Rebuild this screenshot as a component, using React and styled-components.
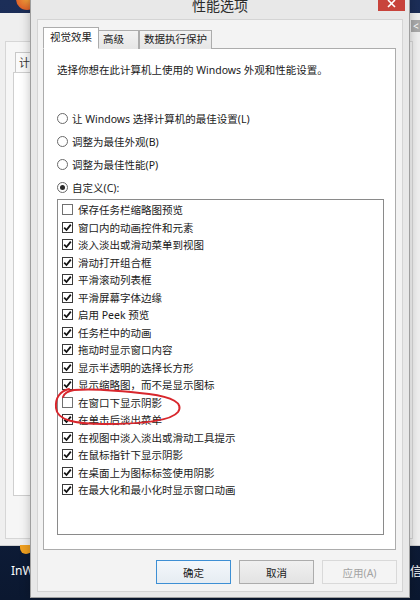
import React from "react";
import styled, { createGlobalStyle } from "styled-components";

const GlobalStyle = createGlobalStyle`
  html, body {
    margin: 0;
    padding: 0;
    width: 420px;
    height: 600px;
    overflow: hidden;
  }
  body {
    font-family: "Noto Sans", "Noto Sans CJK SC", sans-serif;
    color: #1a1a1a;
  }
`;

const Desktop = styled.div`
  position: relative;
  width: 420px;
  height: 600px;
  overflow: hidden;
  background: linear-gradient(180deg, #1c2e58 0%, #13244a 60%, #0b1830 100%);
`;

const Sun = styled.div`
  position: absolute;
  left: 16px;
  top: -12px;
  width: 22px;
  height: 22px;
  border-radius: 50%;
  background: radial-gradient(circle, #f2a23a 0%, #e0622a 70%, #b8402a 100%);
`;

const BackWindow = styled.div`
  position: absolute;
  left: 0;
  top: 13px;
  width: 420px;
  height: 532px;
  background: #efefef;
  border-bottom: 1px solid #d0d0d0;
`;

const BackPanel = styled.div`
  position: absolute;
  left: 5px;
  top: 28px;
  width: 408px;
  height: 498px;
  box-sizing: border-box;
  border: 1px solid #d6d6d6;
  background: #f6f6f6;
`;

const BackTab = styled.div`
  position: absolute;
  left: 9px;
  top: 10px;
  width: 30px;
  height: 20px;
  box-sizing: border-box;
  border: 1px solid #c8c8c8;
  border-bottom: none;
  background: #fafafa;
  font-size: 11px;
  line-height: 19px;
  padding-left: 3px;
  color: #333;
`;

const BackList = styled.div`
  position: absolute;
  left: 7px;
  top: 30px;
  width: 397px;
  height: 424px;
  box-sizing: border-box;
  border: 1px solid #cfcfcf;
  background: #fff;
`;

const BackArrow = styled.div`
  position: absolute;
  left: 411px;
  top: 7px;
  width: 12px;
  height: 12px;
  background: #a9a9a9;
  color: #fff;
  font-size: 10px;
  line-height: 12px;
  padding-left: 2px;
`;

const DesktopLabel = styled.div`
  position: absolute;
  top: 562px;
  left: ${(p) => p.$left}px;
  color: #fff;
  font-size: 12px;
  font-family: "Noto Sans", "Noto Sans CJK SC", sans-serif;
`;

const Icon = styled.div`
  position: absolute;
  left: 20px;
  top: 545px;
  width: 12px;
  height: 9px;
  border-radius: 0 0 6px 6px;
  background: #f0a020;
`;

const Dialog = styled.div`
  position: absolute;
  left: 30px;
  top: -6px;
  width: 380px;
  height: 604px;
  box-sizing: border-box;
  border: 1px solid #9e9e9e;
  background: #e8e8e8;
  display: flex;
  flex-direction: column;
  padding: 0 6px 5px;
  box-shadow: 0 0 10px rgba(0, 0, 0, 0.25);
`;

const TitleBar = styled.div`
  height: 24px;
  flex: none;
  text-align: center;
  font-size: 14px;
  line-height: 22px;
  color: #2b2b2b;
`;

const CloseButton = styled.div`
  position: absolute;
  right: 4px;
  top: 0;
  width: 27px;
  height: 16px;
  background: #c8433b;
  color: #fff;
  display: flex;
  align-items: center;
  justify-content: center;
`;

const Client = styled.div`
  flex: 1;
  display: flex;
  flex-direction: column;
  background: #f3f3f3;
  border: 1px solid #d4d4d4;
  padding: 8px 6px 7px 5px;
  min-height: 0;
`;

const Tabs = styled.div`
  display: flex;
  align-items: flex-end;
  height: 21px;
  margin-bottom: -1px;
  position: relative;
  z-index: 1;
`;

const Tab = styled.div`
  box-sizing: border-box;
  width: ${(p) => p.$w}px;
  height: ${(p) => (p.$active ? 22 : 19)}px;
  padding-left: ${(p) => (p.$active ? 6 : 4)}px;
  margin-right: ${(p) => (p.$active ? -1 : 0)}px;
  border: 1px solid #acacac;
  border-bottom: ${(p) => (p.$active ? "1px solid #fff" : "none")};
  background: ${(p) =>
    p.$active ? "#fff" : "linear-gradient(180deg, #f2f2f2, #e6e6e6)"};
  font-size: 10.5px;
  line-height: ${(p) => (p.$active ? 19 : 17)}px;
  color: #1a1a1a;
  white-space: nowrap;
  position: relative;
  z-index: ${(p) => (p.$active ? 2 : 1)};
`;

const Panel = styled.div`
  flex: 1;
  display: flex;
  flex-direction: column;
  background: #fff;
  border: 1px solid #acacac;
  padding: 14px 11px 14px 13px;
  min-height: 0;
`;

const Description = styled.div`
  font-size: 10.5px;
  line-height: 14px;
  margin-bottom: 30px;
`;

const RadioRow = styled.div`
  height: 23px;
  display: flex;
  align-items: center;
  gap: 4px;
  font-size: 10.5px;
`;

const Radio = styled.span`
  box-sizing: border-box;
  width: 11px;
  height: 11px;
  border-radius: 50%;
  border: 1px solid #6a6a6a;
  background: #fff;
  display: flex;
  align-items: center;
  justify-content: center;
  flex: none;

  &::after {
    content: "";
    width: 5px;
    height: 5px;
    border-radius: 50%;
    background: ${(p) => (p.$checked ? "#2a2a2a" : "transparent")};
  }
`;

const ListBox = styled.div`
  position: relative;
  flex: 1;
  border: 1px solid #8a8a8a;
  background: #fff;
  padding-top: 1px;
`;

const Item = styled.div`
  height: 17.5px;
  display: flex;
  align-items: center;
  gap: 5px;
  padding-left: 4px;
  font-size: 10.5px;
  white-space: nowrap;
`;

const Box = styled.span`
  box-sizing: border-box;
  width: 11px;
  height: 11px;
  border: 1px solid ${(p) => (p.$checked ? "#3a3a3a" : "#707070")};
  background: #fff;
  display: flex;
  align-items: center;
  justify-content: center;
  flex: none;
`;

const Circle = styled.svg`
  position: absolute;
  left: -4px;
  top: 186px;
  pointer-events: none;
`;

const Buttons = styled.div`
  display: flex;
  justify-content: flex-end;
  gap: 8px;
  margin-top: 10px;
  margin-right: -1px;
`;

const Button = styled.div`
  box-sizing: border-box;
  width: 75px;
  height: 24px;
  display: flex;
  align-items: center;
  justify-content: center;
  font-size: 10.5px;
  color: ${(p) => (p.$disabled ? "#a3a3a3" : "#1a1a1a")};
  border: 1px solid
    ${(p) => (p.$primary ? "#3d8fd4" : p.$disabled ? "#d9d9d9" : "#acacac")};
  background: ${(p) =>
    p.$disabled
      ? "#f4f4f4"
      : p.$primary
      ? "linear-gradient(180deg, #f3f7fb, #e6ecf2)"
      : "linear-gradient(180deg, #f0f0f0, #e3e3e3)"};
`;

const options = [
  { label: "让 Windows 选择计算机的最佳设置(L)" },
  { label: "调整为最佳外观(B)" },
  { label: "调整为最佳性能(P)" },
  { label: "自定义(C):", checked: true },
];

const effects = [
  ["保存任务栏缩略图预览", false],
  ["窗口内的动画控件和元素", true],
  ["淡入淡出或滑动菜单到视图", true],
  ["滑动打开组合框", true],
  ["平滑滚动列表框", true],
  ["平滑屏幕字体边缘", true],
  ["启用 Peek 预览", true],
  ["任务栏中的动画", true],
  ["拖动时显示窗口内容", true],
  ["显示半透明的选择长方形", true],
  ["显示缩略图，而不是显示图标", true],
  ["在窗口下显示阴影", false],
  ["在单击后淡出菜单", true],
  ["在视图中淡入淡出或滑动工具提示", true],
  ["在鼠标指针下显示阴影", true],
  ["在桌面上为图标标签使用阴影", true],
  ["在最大化和最小化时显示窗口动画", true],
];

const Check = () => (
  <svg width="9" height="9" viewBox="0 0 9 9">
    <path
      d="M1.2 4.6 L3.5 7 L7.8 1.6"
      fill="none"
      stroke="#111"
      strokeWidth="1.8"
      strokeLinejoin="miter"
    />
  </svg>
);

const App = () => {
  return (
    <Desktop>
      <GlobalStyle />
      <Sun />
      <BackWindow>
        <BackPanel>
          <BackTab>计</BackTab>
          <BackList />
        </BackPanel>
        <BackArrow>&lt;</BackArrow>
      </BackWindow>
      <Icon />
      <DesktopLabel $left={11}>InW</DesktopLabel>
      <DesktopLabel $left={410}>信</DesktopLabel>

      <Dialog>
        <TitleBar>性能选项</TitleBar>
        <CloseButton>
          <svg width="9" height="9" viewBox="0 0 9 9">
            <path d="M1 1 L8 8 M8 1 L1 8" stroke="#fff" strokeWidth="1.6" />
          </svg>
        </CloseButton>
        <Client>
          <Tabs>
            <Tab $active $w={56}>视觉效果</Tab>
            <Tab $w={41}>高级</Tab>
            <Tab $w={73}>数据执行保护</Tab>
          </Tabs>
          <Panel>
            <Description>
              选择你想在此计算机上使用的 Windows 外观和性能设置。
            </Description>
            {options.map((o) => (
              <RadioRow key={o.label}>
                <Radio $checked={o.checked} />
                {o.label}
              </RadioRow>
            ))}
            <ListBox>
              {effects.map(([label, checked]) => (
                <Item key={label}>
                  <Box $checked={checked}>{checked && <Check />}</Box>
                  {label}
                </Item>
              ))}
              <Circle width="130" height="42" viewBox="0 0 130 42">
                <path
                  d="M15 3 C6 5 1 12 2 22 C3 34 20 38 50 38 C85 38 117 35 124 26 C130 17 118 11 95 8 C70 5 40 2 20 4 C14 5 10 8 9 11"
                  fill="none"
                  stroke="#d8262c"
                  strokeWidth="2"
                  strokeLinecap="round"
                />
              </Circle>
            </ListBox>
          </Panel>
          <Buttons>
            <Button $primary>确定</Button>
            <Button>取消</Button>
            <Button $disabled>应用(A)</Button>
          </Buttons>
        </Client>
      </Dialog>
    </Desktop>
  );
};

export default App;
